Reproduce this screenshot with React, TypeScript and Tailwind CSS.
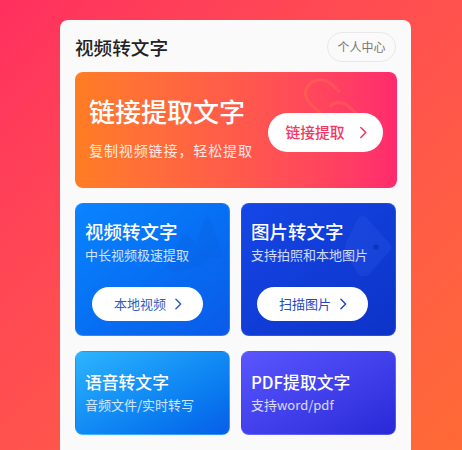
import React from 'react';

const cjk = "font-['Noto_Sans_CJK_SC','Noto_Sans',sans-serif]";

const Chevron: React.FC<{ className?: string }> = ({ className }) => (
  <svg className={className} viewBox="0 0 10 14" fill="none" stroke="currentColor" strokeWidth={1.7} strokeLinecap="round" strokeLinejoin="round">
    <path d="M2 1.5 7.5 7 2 12.5" />
  </svg>
);

// faint mountains behind the video card text
const MountainMark: React.FC = () => (
  <svg className="absolute left-[88px] top-[10px] w-[62px] h-[64px] text-[#0a5fe0]/30" viewBox="0 0 62 64" fill="currentColor">
    <path d="M33 27 40 6 C41 2 45 2 46 6 L58 38 C59 42 57 45 53 45 L42 45 Z" />
    <path d="M4 48 17 24 C19 20 24 20 27 24 L42 42 C45 46 43 50 39 51 L12 58 C5 59 1 54 4 48 Z" />
  </svg>
);

// faint tag behind the image card text
const TagMark: React.FC = () => (
  <svg className="absolute left-[101px] top-[12px] w-[50px] h-[62px] text-[#2a5be8]/30" viewBox="0 0 50 62" fill="currentColor">
    <path d="M4 24 14 4 C16 0 20 -1 24 2 L46 27 C49 30 49 33 46 36 L26 58 C23 61 18 61 15 58 L4 40 C1 35 1 29 4 24 Z" />
    <circle cx="33" cy="31" r="2.6" fill="#0d33b8" />
  </svg>
);

type ToolCardProps = {
  title: string;
  sub: string;
  action: string;
  bg: string;
  mark: React.ReactNode;
  actionColor: string;
  actionOffset: string;
};

const ToolCard: React.FC<ToolCardProps> = ({ title, sub, action, bg, mark, actionColor, actionOffset }) => (
  <div className={`relative overflow-hidden h-[133px] rounded-[8px] pl-[9px] pt-[15px] text-white border border-white/10 ${bg}`}>
    {mark}
    <div className="relative text-[18.5px] leading-[24px] font-medium">{title}</div>
    <div className="relative mt-[3px] text-[13px] leading-[18px] text-white/80">{sub}</div>
    <div className={`relative mt-[23px] w-[111px] h-[34px] pl-[2px] rounded-full bg-white flex items-center justify-center gap-[8px] text-[13px] ${actionOffset} ${actionColor}`}>
      <span>{action}</span>
      <Chevron className="w-[9px] h-[12px]" />
    </div>
  </div>
);

const SmallCard: React.FC<{ title: string; sub: string; bg: string }> = ({ title, sub, bg }) => (
  <div className={`h-[84px] rounded-[8px] pl-[9px] pt-[19px] text-white border border-white/10 ${bg}`}>
    <div className="text-[16.8px] leading-[22px] font-medium">{title}</div>
    <div className="mt-[3px] text-[13px] leading-[18px] text-white/80">{sub}</div>
  </div>
);

export default function App() {
  return (
    <div className={`w-[462px] h-[450px] overflow-hidden pt-[20px] pl-[60px] bg-gradient-to-br from-[#ff2f5f] to-[#ff6a35] ${cjk}`}>
      <div className="w-[351px] h-[430px] rounded-t-[8px] bg-[#fafafa] pl-[15px] pr-[14px]">
        {/* header */}
        <div className="h-[52px] flex items-center justify-between pr-[1px] pt-[2px]">
          <span className="text-[18.6px] text-[#222] font-medium">视频转文字</span>
          <span className="w-[69px] h-[30px] rounded-full border border-[#e8e8e8] flex items-center justify-center text-[12px] text-[#777]">个人中心</span>
        </div>

        {/* link banner */}
        <div className="relative overflow-hidden h-[116px] rounded-[8px] bg-gradient-to-r from-[#ff7d22] via-[#ff5a4a] to-[#ff2a6d] pl-[14px] pt-[23px] text-white">
          <svg className="absolute left-[228px] top-[6px] w-[62px] h-[50px] text-[#ff8a3c]/25" viewBox="0 0 62 50" fill="none" stroke="currentColor" strokeWidth={3} strokeLinecap="round">
            <path d="M36 13 27 5 C20 0 10 1 5 8 C1 14 2 20 7 25 L20 38" />
            <path d="M28 28 C32 23 40 24 45 28 L56 38" />
          </svg>
          <div className="relative text-[26px] leading-[32px] font-medium">链接提取文字</div>
          <div className="relative mt-[13px] text-[14px] leading-[20px] tracking-[0.9px] text-white/85">复制视频链接，轻松提取</div>
          <div className="absolute left-[193px] top-[41px] w-[115px] h-[39px] pl-[2px] rounded-full bg-white flex items-center justify-center gap-[14px] text-[14.8px] text-[#f6365f] font-medium">
            <span>链接提取</span>
            <Chevron className="w-[9px] h-[13px]" />
          </div>
        </div>

        {/* tools */}
        <div className="mt-[15px] grid grid-cols-[155px_155px] gap-x-[11px] gap-y-[15px]">
          <ToolCard title="视频转文字" sub="中长视频极速提取" action="本地视频" bg="bg-gradient-to-br from-[#0a84ff] to-[#0a5ae8]" mark={<MountainMark />} actionColor="text-[#2a5fc4]" actionOffset="ml-[7px]" />
          <ToolCard title="图片转文字" sub="支持拍照和本地图片" action="扫描图片" bg="bg-gradient-to-br from-[#1546e6] to-[#0d33c8]" mark={<TagMark />} actionColor="text-[#2447c0]" actionOffset="ml-[6px]" />
          <SmallCard title="语音转文字" sub="音频文件/实时转写" bg="bg-gradient-to-br from-[#2db4ff] to-[#0a5ee8]" />
          <SmallCard title="PDF提取文字" sub="支持word/pdf" bg="bg-gradient-to-br from-[#5a55ff] to-[#2a28d8]" />
        </div>
      </div>
    </div>
  );
}
